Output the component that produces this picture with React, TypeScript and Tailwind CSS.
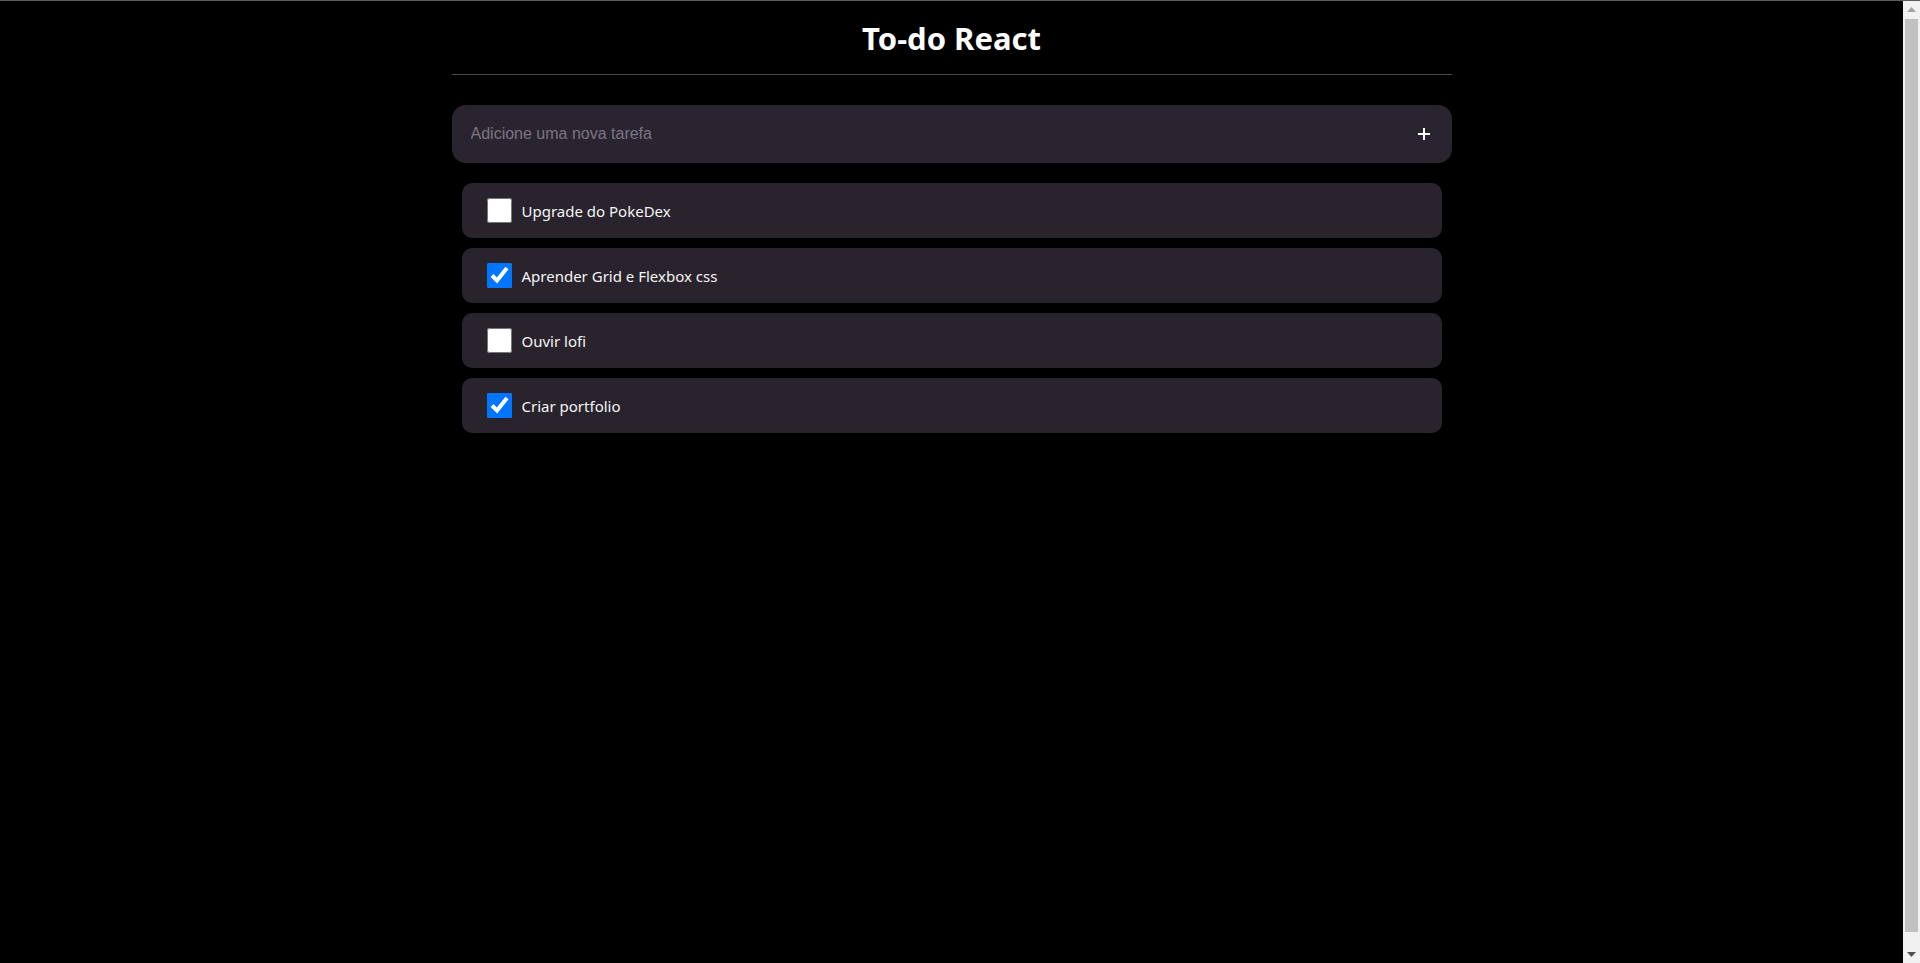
import React from 'react';

const tasks = [
  { id: 1, title: 'Upgrade do PokeDex', done: false },
  { id: 2, title: 'Aprender Grid e Flexbox css', done: true },
  { id: 3, title: 'Ouvir lofi', done: false },
  { id: 4, title: 'Criar portfolio', done: true },
];

export default function App() {
  return (
    <div className="h-[963px] bg-black border-t border-[#5a5a5a] text-white font-['Segoe_UI','Noto_Sans',sans-serif] flex overflow-hidden">
      <main className="flex-1 min-w-0">
        <div className="max-w-[1000px] mx-auto">
          {/* Header */}
          <header className="border-b border-[#4a4a4a] pt-[15px] pb-[13px]">
            <h1 className="text-center text-[31px] font-bold leading-[45px]">To-do React</h1>
          </header>

          {/* New task */}
          <form className="mt-[30px] h-[58px] bg-[#2a2430] rounded-[14px] flex items-center pl-[19px] pr-[21px]">
            <input
              type="text"
              placeholder="Adicione uma nova tarefa"
              className="flex-1 bg-transparent outline-none text-[16px] text-white placeholder:text-[#7a7580] font-['Liberation_Sans',Arial,sans-serif]"
            />
            <button type="button" className="w-[14px] h-[14px] flex items-center justify-center">
              <svg width="14" height="14" viewBox="0 0 14 14">
                <path d="M7 1v12M1 7h12" stroke="#fff" strokeWidth="2" />
              </svg>
            </button>
          </form>

          {/* Task list */}
          <ul className="mt-[20px] mx-[10px] flex flex-col gap-[10px]">
            {tasks.map((t) => (
              <li key={t.id} className="h-[55px] bg-[#29232d] rounded-[10px] flex items-center px-[25px] gap-[10px]">
                <input
                  type="checkbox"
                  defaultChecked={t.done}
                  className="w-[25px] h-[25px] m-0 accent-[#0075ff]"
                />
                <span className="text-[15px] text-[#f5f5f5] pt-[1px]">{t.title}</span>
              </li>
            ))}
          </ul>
        </div>
      </main>

      {/* Browser scrollbar */}
      <aside className="w-[17px] shrink-0 bg-[#f1f1f1] flex flex-col">
        <div className="h-[17px] flex items-center justify-center">
          <svg width="9" height="5" viewBox="0 0 9 5">
            <path d="M4.5 0L9 5H0z" fill="#a3a3a3" />
          </svg>
        </div>
        <div className="flex-1 mx-[2px] mt-[1px] mb-[14px] bg-[#c1c1c1]" />
        <div className="h-[17px] flex items-center justify-center">
          <svg width="9" height="5" viewBox="0 0 9 5">
            <path d="M0 0h9L4.5 5z" fill="#505050" />
          </svg>
        </div>
      </aside>
    </div>
  );
}
